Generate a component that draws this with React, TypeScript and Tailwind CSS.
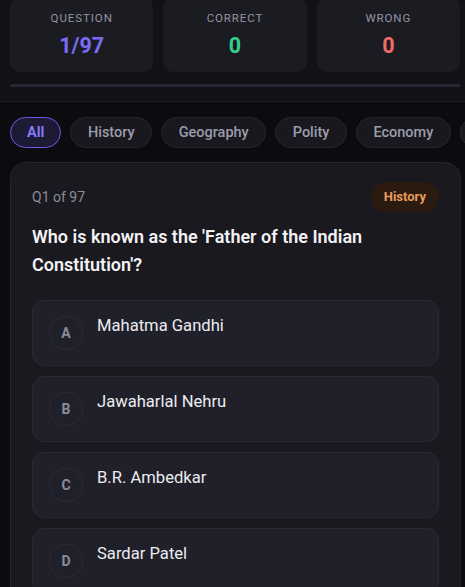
import React from 'react'

const stats = [
	{label: 'QUESTION', value: '1/97', color: 'text-[#7b6cf2]'},
	{label: 'CORRECT', value: '0', color: 'text-[#34d08c]'},
	{label: 'WRONG', value: '0', color: 'text-[#f26b6b]'},
]

const categories = ['All', 'History', 'Geography', 'Polity', 'Economy', 'Science']

const options = [
	{key: 'A', text: 'Mahatma Gandhi'},
	{key: 'B', text: 'Jawaharlal Nehru'},
	{key: 'C', text: 'B.R. Ambedkar'},
	{key: 'D', text: 'Sardar Patel'},
]

export default function App() {
	return (
		<div
			className='h-[587px] w-[465px] overflow-hidden bg-[#0c0c10] text-white'
			style={{fontFamily: 'Roboto, "Noto Sans", sans-serif'}}
		>
			{/* Sticky header with stats */}
			<div className='border-b border-[#1d1d24] bg-[#111116] pl-[10px] pr-[5px] pb-[14px]'>
				<div className='-mt-[3px] grid grid-cols-3 gap-[10px]'>
					{stats.map((s) => (
						<div
							key={s.label}
							className='flex flex-col items-center rounded-[10px] bg-[#1b1b22] pt-[13px] pb-[12px]'
						>
							<span className='text-[11.5px] leading-4 tracking-[0.08em] text-[#9494a2]'>
								{s.label}
							</span>
							<span className={`mt-[6px] text-[21.5px] font-bold leading-7 ${s.color}`}>
								{s.value}
							</span>
						</div>
					))}
				</div>
				<div className='mt-[12px] h-[3px] rounded-full bg-[#272735]' />
			</div>

			{/* Category chips */}
			<div className='flex gap-[9px] overflow-hidden pl-[10px] pt-[15px] whitespace-nowrap'>
				{categories.map((c, i) => (
					<div
						key={c}
						className={
							i === 0
								? 'flex h-[31px] shrink-0 items-center rounded-full border border-[#6b5ce0] bg-[#1c1a34] px-[16px] text-[14.5px] font-bold text-[#8878f5]'
								: 'flex h-[31px] shrink-0 items-center rounded-full border border-[#25252d] bg-[#18181e] px-[16.5px] text-[14.5px] font-medium text-[#9c9cab]'
						}
					>
						{c}
					</div>
				))}
			</div>

			{/* Question card */}
			<div className='ml-[10px] mr-[4px] mt-[14px] rounded-[16px] border border-[#24242d] bg-[#19191f] px-[21px] pt-[19px] pb-6'>
				<div className='flex items-center justify-between'>
					<span className='text-[14px] text-[#8c8c98]'>Q1 of 97</span>
					<span className='flex h-[30px] items-center rounded-full bg-[#2a1a10] px-[13px] text-[13px] font-bold text-[#e89a5c]'>
						History
					</span>
				</div>
				<p className='mt-[11px] text-[18px] font-semibold leading-[28px] text-[#f2f2f5]'>
					Who is known as the 'Father of the Indian Constitution'?
				</p>
				<div className='mt-[21px] flex flex-col gap-[10px]'>
					{options.map((o) => (
						<div
							key={o.key}
							className='flex h-[66px] items-start gap-[14px] rounded-[12px] border border-[#2a2a34] bg-[#20202a] px-[16px] pt-[15px]'
						>
							<span className='flex h-[34px] w-[34px] shrink-0 items-center justify-center rounded-full border border-[#2c2c37] text-[14px] font-bold text-[#8a8a99]'>
								{o.key}
							</span>
							<span className='-mt-[2px] text-[16.6px] leading-6 text-[#ececf0]'>{o.text}</span>
						</div>
					))}
				</div>
			</div>
		</div>
	)
}
